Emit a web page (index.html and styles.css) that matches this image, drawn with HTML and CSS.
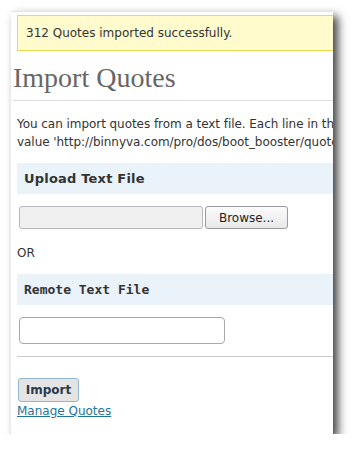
FILE: index.html
```html
<!DOCTYPE html>
<html lang="en">
<head>
  <meta charset="UTF-8">
  <meta name="viewport" content="width=device-width, initial-scale=1.0">
  <title>Import Quotes</title>
  <link rel="stylesheet" href="styles.css">
</head>
<body>
  <div class="janela">
    <div class="pagina">
      <div class="aviso">312 Quotes imported successfully.</div>
      <h2>Import Quotes</h2>
      <div class="conteudo">
        <p class="intro">You can import quotes from a text file. Each line in the file will be a quote. For example, the file at<br>value 'http://binnyva.com/pro/dos/boot_booster/quotes.txt'</p>
        <h3 class="barra">Upload Text File</h3>
        <div class="arquivo">
          <input type="text" class="caminho" readonly>
          <button type="button" class="browse">Browse...</button>
        </div>
        <p class="ou">OR</p>
        <h3 class="barra mono">Remote Text File</h3>
        <input type="text" class="remoto">
        <hr>
        <button type="button" class="importar">Import</button><br>
        <a href="#" class="link">Manage Quotes</a>
      </div>
    </div>
  </div>
</body>
</html>
```

FILE: styles.css
```css
body {
  margin: 0;
  background-color: #ffffff;
  font-family: "DejaVu Sans", Verdana, sans-serif;
  font-size: 12px;
  color: #333333;
}
.janela {
  margin: 11px 0 0 11px;
  width: 322px;
  height: 422px;
  overflow: hidden;
  background-color: #ffffff;
  border-top: 1px solid #e6e6d8;
  box-shadow: 5px 5px 9px rgba(0, 0, 0, 0.75);
}
.pagina {
  width: 420px;
  padding-left: 2px;
}
.aviso {
  margin: 3px 0 0 4px;
  height: 34px;
  line-height: 34px;
  padding-left: 8px;
  background-color: #fffbcc;
  border: 1px solid #e6db55;
  color: #333333;
}
h2 {
  margin: 11px 0 0 0;
  font-family: "Liberation Serif", "Times New Roman", serif;
  font-size: 28px;
  font-weight: normal;
  line-height: 31px;
  color: #666666;
  padding-bottom: 7px;
  border-bottom: 1px solid #dddddd;
}
.conteudo {
  padding-left: 4px;
}
.intro {
  margin: 14px 0 0 0;
  line-height: 18px;
  white-space: nowrap;
  letter-spacing: -0.05px;
}
.barra {
  margin: 12px 0 0 0;
  height: 31px;
  line-height: 31px;
  padding: 0 7px;
  background-color: #eaf2fa;
  font-size: 13px;
  letter-spacing: 0.2px;
  color: #333333;
}
.mono {
  font-family: "DejaVu Sans Mono", monospace;
  letter-spacing: 0;
}
.arquivo {
  display: flex;
  gap: 2px;
  margin: 12px 0 0 2px;
}
.caminho {
  box-sizing: border-box;
  width: 184px;
  height: 23px;
  margin: 0;
  background-color: #f0f0f0;
  border: 1px solid #b8b8b8;
  border-radius: 3px;
}
.browse {
  box-sizing: border-box;
  width: 83px;
  height: 23px;
  margin: 0;
  padding: 0;
  font-family: "DejaVu Sans", sans-serif;
  font-size: 12px;
  color: #222222;
  background: linear-gradient(#fbfbfb, #e9e9e9);
  border: 1px solid #9a9a9a;
  border-radius: 3px;
}
.ou {
  margin: 15px 0 0 0;
  line-height: 18px;
}
.remoto {
  box-sizing: border-box;
  display: block;
  width: 206px;
  height: 27px;
  margin: 12px 0 0 2px;
  background-color: #ffffff;
  border: 1px solid #a8a8a8;
  border-radius: 4px;
}
hr {
  margin: 12px 0 0 0;
  border: none;
  border-top: 1px solid #cccccc;
}
.importar {
  box-sizing: border-box;
  margin: 21px 0 0 1px;
  width: 61px;
  height: 24px;
  padding: 0;
  font-family: "DejaVu Sans", sans-serif;
  font-size: 12px;
  font-weight: bold;
  color: #2a3b4c;
  background-color: #e4e4e4;
  border: 1px solid #92b6cc;
  border-radius: 3px;
}
.link {
  display: inline-block;
  margin-top: 1px;
  color: #21759b;
  line-height: 16px;
}
```
